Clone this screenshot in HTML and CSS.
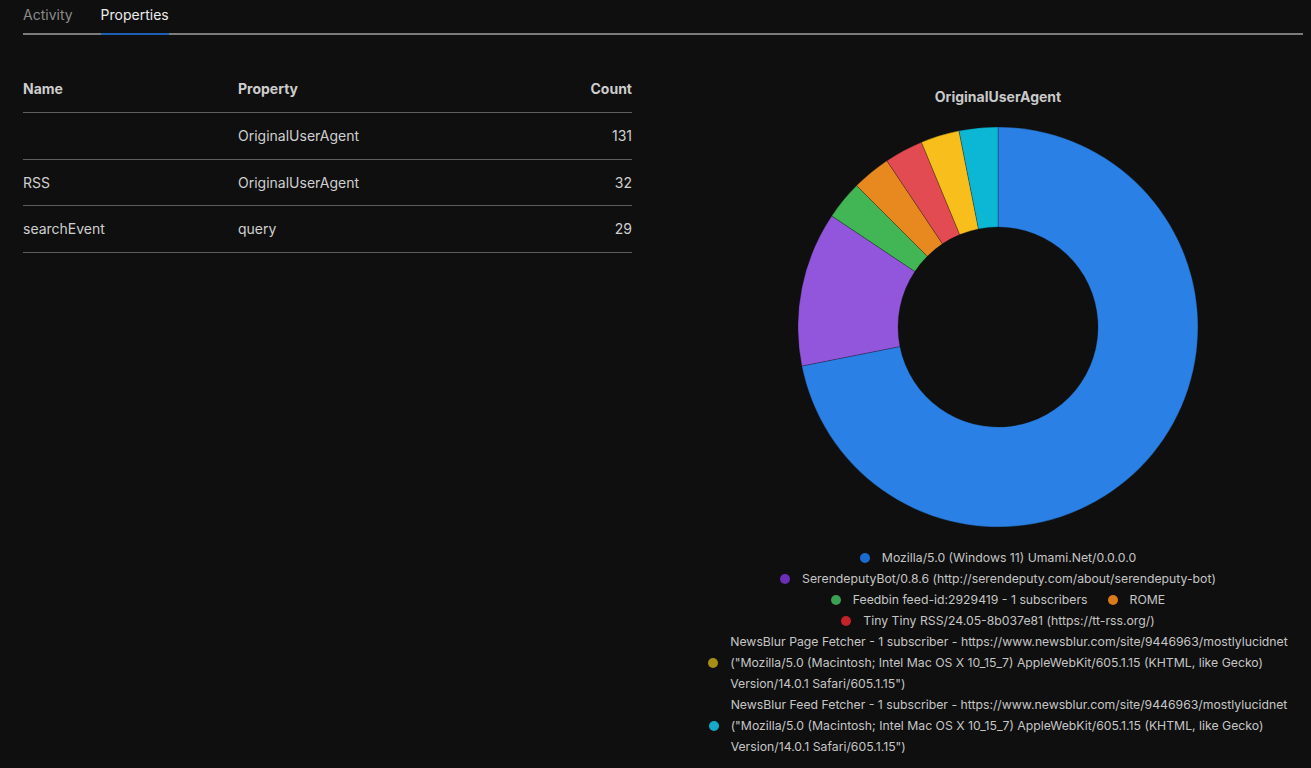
FILE: index.html
```html
<!DOCTYPE html>
<html lang="en">
<head>
<meta charset="utf-8">
<title>Properties</title>
<link rel="stylesheet" href="styles.css">
</head>
<body>
<div class="page">
  <nav class="tabs">
    <span class="tab">Activity</span>
    <span class="tab active">Properties</span>
  </nav>
  <main class="content">
    <section class="table-col">
      <table class="props">
        <thead>
          <tr><th class="c-name">Name</th><th class="c-prop">Property</th><th class="c-count">Count</th></tr>
        </thead>
        <tbody>
          <tr><td class="c-name"></td><td class="c-prop">OriginalUserAgent</td><td class="c-count">131</td></tr>
          <tr><td class="c-name">RSS</td><td class="c-prop">OriginalUserAgent</td><td class="c-count">32</td></tr>
          <tr><td class="c-name">searchEvent</td><td class="c-prop">query</td><td class="c-count">29</td></tr>
        </tbody>
      </table>
    </section>
    <section class="chart-col">
      <h3 class="chart-title">OriginalUserAgent</h3>
      <svg class="donut" width="400" height="400" viewBox="-200 -200 400 400">
        <path class="s-blue" d="M0,-200 A200,200 0 1 1 -196.16,39.02 L-98.08,19.51 A100,100 0 1 0 0,-100 Z"/>
        <path class="s-purple" d="M-196.16,39.02 A200,200 0 0 1 -166.29,-111.11 L-83.15,-55.56 A100,100 0 0 0 -98.08,19.51 Z"/>
        <path class="s-green" d="M-166.29,-111.11 A200,200 0 0 1 -141.42,-141.42 L-70.71,-70.71 A100,100 0 0 0 -83.15,-55.56 Z"/>
        <path class="s-orange" d="M-141.42,-141.42 A200,200 0 0 1 -111.11,-166.29 L-55.56,-83.15 A100,100 0 0 0 -70.71,-70.71 Z"/>
        <path class="s-red" d="M-111.11,-166.29 A200,200 0 0 1 -76.54,-184.78 L-38.27,-92.39 A100,100 0 0 0 -55.56,-83.15 Z"/>
        <path class="s-yellow" d="M-76.54,-184.78 A200,200 0 0 1 -39.02,-196.16 L-19.51,-98.08 A100,100 0 0 0 -38.27,-92.39 Z"/>
        <path class="s-cyan" d="M-39.02,-196.16 A200,200 0 0 1 0,-200 L0,-100 A100,100 0 0 0 -19.51,-98.08 Z"/>
      </svg>
      <ul class="legend">
        <li class="item"><span class="dot d-blue"></span><span class="label">Mozilla/5.0 (Windows 11) Umami.Net/0.0.0.0</span></li>
        <li class="item"><span class="dot d-purple"></span><span class="label">SerendeputyBot/0.8.6 (http://serendeputy.com/about/serendeputy-bot)</span></li>
        <li class="item"><span class="dot d-green"></span><span class="label">Feedbin feed-id:2929419 - 1 subscribers</span></li>
        <li class="item"><span class="dot d-orange"></span><span class="label">ROME</span></li>
        <li class="item"><span class="dot d-red"></span><span class="label">Tiny Tiny RSS/24.05-8b037e81 (https://tt-rss.org/)</span></li>
        <li class="item"><span class="dot d-yellow"></span><span class="label">NewsBlur Page Fetcher - 1 subscriber - https://www.newsblur.com/site/9446963/mostlylucidnet<br>("Mozilla/5.0 (Macintosh; Intel Mac OS X 10_15_7) AppleWebKit/605.1.15 (KHTML, like Gecko)<br>Version/14.0.1 Safari/605.1.15")</span></li>
        <li class="item"><span class="dot d-cyan"></span><span class="label">NewsBlur Feed Fetcher - 1 subscriber - https://www.newsblur.com/site/9446963/mostlylucidnet<br>("Mozilla/5.0 (Macintosh; Intel Mac OS X 10_15_7) AppleWebKit/605.1.15 (KHTML, like Gecko)<br>Version/14.0.1 Safari/605.1.15")</span></li>
      </ul>
    </section>
  </main>
</div>
</body>
</html>
```

FILE: styles.css
```css
html, body {
  margin: 0;
  padding: 0;
  background: #0f0f0f;
  color: #d2d2d2;
  font-family: Inter, "Noto Sans", sans-serif;
  font-size: 14px;
}

.page {
  margin: 0 8px 0 23px;
}

.tabs {
  display: flex;
  gap: 28px;
  height: 33px;
  border-bottom: 2px solid #7b7b7b;
}

.tab {
  line-height: 30px;
  color: #8b8b8b;
  font-size: 14px;
}

.tab.active {
  color: #ececec;
  border-bottom: 2px solid #1d5fb3;
  margin-bottom: -2px;
  height: 35px;
  box-sizing: border-box;
}

.content {
  display: grid;
  grid-template-columns: 609px 610px;
  column-gap: 61px;
  margin-top: 32px;
  align-items: start;
}

.props {
  width: 100%;
  border-collapse: collapse;
}

.props th,
.props td {
  line-height: 20px;
  border-bottom: 1px solid #5e5e5e;
  text-align: left;
}

.props th {
  padding: 12px 0 13px;
  font-weight: 700;
  color: #cdcdcd;
}

.props td {
  padding: 13px 0 12.5px;
  color: #cfcfcf;
}

.c-name { width: 215px; }
.props .c-count { text-align: right; }

.chart-col {
  display: flex;
  flex-direction: column;
  align-items: center;
  padding-top: 20px;
}

.chart-title {
  margin: 0;
  font-size: 14px;
  line-height: 20px;
  font-weight: 700;
  color: #c9c9c9;
}

.donut {
  display: block;
  margin-top: 20px;
}

.donut path {
  stroke: rgba(15, 15, 15, 0.35);
  stroke-width: 0.8;
}

.s-blue { fill: #2a80e4; }
.s-purple { fill: #9256dc; }
.s-green { fill: #42b555; }
.s-orange { fill: #e8891f; }
.s-red { fill: #e34b52; }
.s-yellow { fill: #f8bf1c; }
.s-cyan { fill: #0cb7d6; }

.legend {
  list-style: none;
  margin: 20px 0 0;
  padding: 0;
  display: flex;
  flex-wrap: wrap;
  justify-content: center;
  column-gap: 20px;
  width: 610px;
}

.item {
  display: flex;
  align-items: center;
  gap: 12px;
  font-size: 12.25px;
  line-height: 21px;
  color: #c6c6c6;
}

.label {
  white-space: nowrap;
}

.dot {
  width: 10px;
  height: 10px;
  border-radius: 50%;
  flex: none;
}

.d-blue { background: #1c6bd2; }
.d-purple { background: #6a2fb6; }
.d-green { background: #3aa152; }
.d-orange { background: #db7a1a; }
.d-red { background: #c3222b; }
.d-yellow { background: #a68f16; }
.d-cyan { background: #15aac6; }
```
